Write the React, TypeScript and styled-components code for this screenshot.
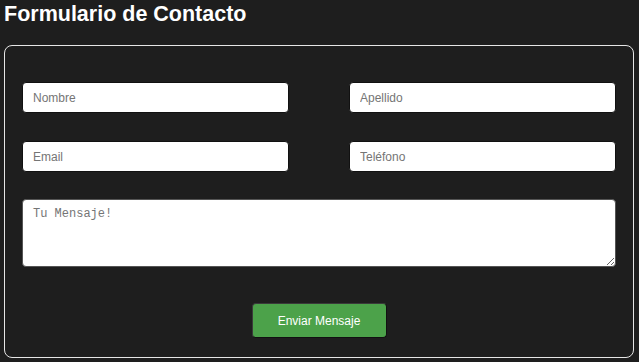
import React from "react";
import styled, { createGlobalStyle } from "styled-components";

const GlobalStyle = createGlobalStyle`
    body {
        margin: 0;
        background-color: #1e1e1e;
        font-family: "Liberation Sans", Arial, sans-serif;
    }
`;

const App = () => {
    return (
        <Page>
            <GlobalStyle />
            <Title>Formulario de Contacto</Title>
            <Card>
                <FieldGrid>
                    <Field placeholder="Nombre" />
                    <Field placeholder="Apellido" />
                    <Field placeholder="Email" />
                    <Field placeholder="Teléfono" />
                    <Message placeholder="Tu Mensaje!" />
                </FieldGrid>
                <ButtonRow>
                    <SendButton>Enviar Mensaje</SendButton>
                </ButtonRow>
            </Card>
        </Page>
    );
};

export default App;

const Page = styled.div`
    padding: 0 5px 3px 4px;
    color: #fff;
`;

const Title = styled.h1`
    margin: 0;
    padding-top: 2px;
    font-size: 21.5px;
    font-weight: bold;
    line-height: 24px;
    height: 43px;
    color: #fff;
`;

const Card = styled.div`
    border: 1px solid #e6e6e6;
    border-radius: 8px;
    padding: 36px 17px 19px 17px;
`;

const FieldGrid = styled.div`
    display: grid;
    grid-template-columns: 1fr 1fr;
    column-gap: 60px;
    row-gap: 28px;
`;

const Field = styled.input`
    box-sizing: border-box;
    height: 31px;
    padding: 0 10px;
    border: 1px solid #111;
    border-radius: 4px;
    background: #fff;
    font-family: "Liberation Sans", Arial, sans-serif;
    font-size: 12px;
    color: #333;
    outline: none;

    &::placeholder {
        color: #757575;
    }
`;

const Message = styled.textarea`
    grid-column: 1 / -1;
    box-sizing: border-box;
    height: 68px;
    margin-top: -1px;
    padding: 7px 10px;
    border: 1px solid #555;
    border-radius: 4px;
    background: #fff;
    font-family: "Liberation Mono", "DejaVu Sans Mono", monospace;
    font-size: 12px;
    outline: none;

    &::placeholder {
        color: #757575;
    }
`;

const ButtonRow = styled.div`
    display: flex;
    justify-content: center;
    margin-top: 36px;
`;

const SendButton = styled.button`
    box-sizing: border-box;
    width: 135px;
    height: 35px;
    border: 1px solid #3a3a3a;
    border-bottom-color: #111;
    border-right-color: #111;
    border-radius: 4px;
    background-color: #4ca24a;
    color: #fff;
    font-family: "Liberation Sans", Arial, sans-serif;
    font-size: 12px;
    cursor: pointer;
`;
